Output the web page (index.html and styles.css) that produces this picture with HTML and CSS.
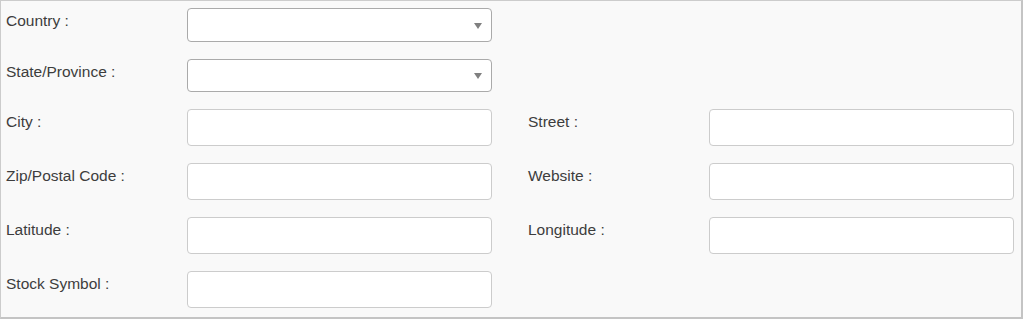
FILE: index.html
```html
<!DOCTYPE html>
<html>
<head>
<meta charset="utf-8">
<link rel="stylesheet" href="styles.css">
</head>
<body>
<div class="panel">
  <div class="row row-select1">
    <div class="field">
      <label class="lbl">Country :</label>
      <div class="select"><span class="caret"></span></div>
    </div>
  </div>
  <div class="row row-select2">
    <div class="field">
      <label class="lbl">State/Province :</label>
      <div class="select"><span class="caret"></span></div>
    </div>
  </div>
  <div class="row">
    <div class="field">
      <label class="lbl">City :</label>
      <div class="input"></div>
    </div>
    <div class="field">
      <label class="lbl">Street :</label>
      <div class="input"></div>
    </div>
  </div>
  <div class="row">
    <div class="field">
      <label class="lbl">Zip/Postal Code :</label>
      <div class="input"></div>
    </div>
    <div class="field">
      <label class="lbl">Website :</label>
      <div class="input"></div>
    </div>
  </div>
  <div class="row">
    <div class="field">
      <label class="lbl">Latitude :</label>
      <div class="input"></div>
    </div>
    <div class="field">
      <label class="lbl">Longitude :</label>
      <div class="input"></div>
    </div>
  </div>
  <div class="row">
    <div class="field">
      <label class="lbl">Stock Symbol :</label>
      <div class="input"></div>
    </div>
  </div>
</div>
</body>
</html>
```
FILE: styles.css
```css
html, body {
  margin: 0;
  padding: 0;
  background: #ffffff;
}
.panel {
  box-sizing: border-box;
  width: 1023px;
  height: 319px;
  background: #f9f9f9;
  border: 1px solid #cccccc;
  border-right: 2px solid #c4c4c4;
  border-bottom: 2px solid #c4c4c4;
  padding: 7px 0 0 5px;
  display: flex;
  flex-direction: column;
  gap: 17px;
  font-family: "Liberation Sans", Arial, sans-serif;
  font-size: 15.5px;
  color: #3d3d3d;
}
.row {
  display: grid;
  grid-template-columns: 486px 486px;
  column-gap: 36px;
}
.field {
  display: grid;
  grid-template-columns: 181px 305px;
  align-items: start;
}
.lbl {
  line-height: 20px;
  padding-top: 3px;
  white-space: nowrap;
}
.select, .input {
  box-sizing: border-box;
  background: #ffffff;
  border-radius: 4px;
}
.select {
  height: 34px;
  border: 1px solid #aaaaaa;
  display: flex;
  align-items: center;
  justify-content: flex-end;
  padding-right: 9px;
}
.row-select2 .select {
  height: 33px;
}
.caret {
  width: 0;
  height: 0;
  border-left: 4px solid transparent;
  border-right: 4px solid transparent;
  border-top: 6px solid #808080;
  margin-top: 1px;
}
.input {
  height: 37px;
  border: 1px solid #cccccc;
}
```
